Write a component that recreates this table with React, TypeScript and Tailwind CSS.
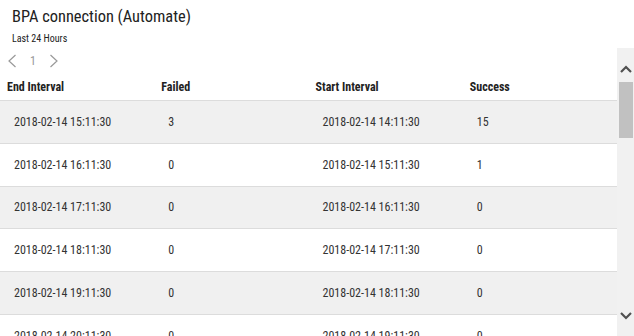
import React from "react";

const rows = [
  ["2018-02-14 15:11:30", "3", "2018-02-14 14:11:30", "15"],
  ["2018-02-14 16:11:30", "0", "2018-02-14 15:11:30", "1"],
  ["2018-02-14 17:11:30", "0", "2018-02-14 16:11:30", "0"],
  ["2018-02-14 18:11:30", "0", "2018-02-14 17:11:30", "0"],
  ["2018-02-14 19:11:30", "0", "2018-02-14 18:11:30", "0"],
  ["2018-02-14 20:11:30", "0", "2018-02-14 19:11:30", "0"],
  ["2018-02-14 21:11:30", "0", "2018-02-14 20:11:30", "0"],
];

const font = { fontFamily: "'Roboto Condensed', Roboto, 'Liberation Sans', sans-serif" };

export default function App() {
  return (
    <div className="w-[634px] h-[336px] bg-white overflow-hidden flex flex-col text-[#333] font-stretch-condensed" style={font}>
      <div className="pl-[12px] pt-[7px]">
        <div className="text-[16.4px] leading-[20px] text-[#222]">BPA connection (Automate)</div>
        <div className="text-[10px] leading-[14px] mt-[5px] text-[#222]">Last 24 Hours</div>
      </div>
      <div className="mt-[2px] flex flex-1 min-h-0">
        <div className="flex-1 min-w-0 overflow-hidden">
          <div className="h-[26px] flex items-center pl-[7px] gap-[13px] text-[#999]">
            <svg width="10" height="14" viewBox="0 0 10 14" fill="none" stroke="#999" strokeWidth="1.2">
              <path d="M8.5 1 L2 7 L8.5 13" />
            </svg>
            <span className="text-[12px] leading-none">1</span>
            <svg width="10" height="14" viewBox="0 0 10 14" fill="none" stroke="#999" strokeWidth="1.2">
              <path d="M1.5 1 L8 7 L1.5 13" />
            </svg>
          </div>
          <div className="grid grid-cols-4 h-[27px] items-center border-b border-[#dcdcdc] text-[12px] font-bold text-[#222]">
            <div className="pl-[7px] pb-[1px]">End Interval</div>
            <div className="pl-[7px] pb-[1px]">Failed</div>
            <div className="pl-[7px] pb-[1px]">Start Interval</div>
            <div className="pl-[7px] pb-[1px]">Success</div>
          </div>
          {rows.map((r, i) => (
            <div
              key={i}
              className={`grid grid-cols-4 h-[42.75px] items-center border-b border-[#dcdcdc] text-[12px] ${i % 2 === 0 ? "bg-[#f0f0f0]" : "bg-white"}`}
            >
              {r.map((c, j) => (
                <div key={j} className="pl-[14px]">{c}</div>
              ))}
            </div>
          ))}
        </div>
        <div className="w-[17px] bg-[#f1f1f1] flex flex-col items-center">
          <svg className="mt-[17px]" width="12" height="8" viewBox="0 0 12 8" fill="none" stroke="#505050" strokeWidth="2.2">
            <path d="M1 7 L6 2 L11 7" />
          </svg>
          <div className="mt-[9px] w-[14px] h-[56px] bg-[#c1c1c1]" />
          <div className="flex-1" />
          <svg className="mb-[16px]" width="12" height="8" viewBox="0 0 12 8" fill="none" stroke="#505050" strokeWidth="2.2">
            <path d="M1 1 L6 6 L11 1" />
          </svg>
        </div>
      </div>
    </div>
  );
}
